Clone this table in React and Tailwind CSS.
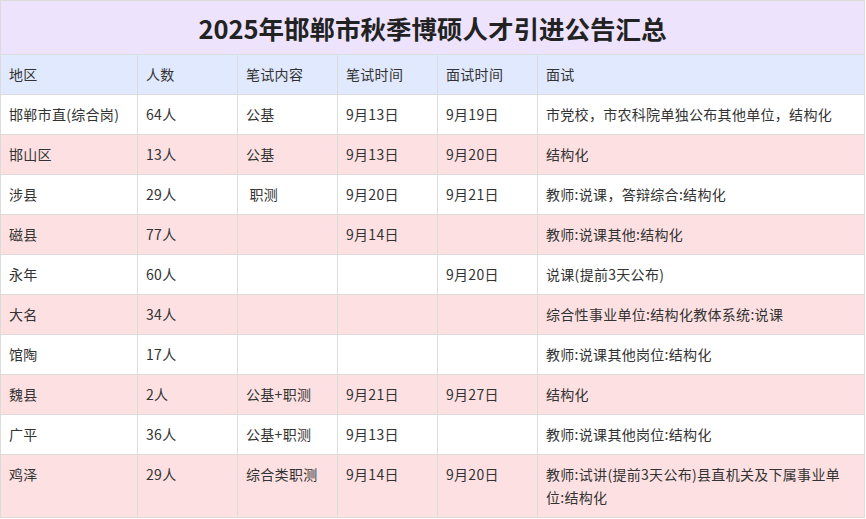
const rows = [
  ["邯郸市直(综合岗)", "64人", "公基", "9月13日", "9月19日", "市党校，市农科院单独公布其他单位，结构化"],
  ["邯山区", "13人", "公基", "9月13日", "9月20日", "结构化"],
  ["涉县", "29人", "\u00a0职测", "9月20日", "9月21日", "教师:说课，答辩综合:结构化"],
  ["磁县", "77人", "", "9月14日", "", "教师:说课其他:结构化"],
  ["永年", "60人", "", "", "9月20日", "说课(提前3天公布)"],
  ["大名", "34人", "", "", "", "综合性事业单位:结构化教体系统:说课"],
  ["馆陶", "17人", "", "", "", "教师:说课其他岗位:结构化"],
  ["魏县", "2人", "公基+职测", "9月21日", "9月27日", "结构化"],
  ["广平", "36人", "公基+职测", "9月13日", "", "教师:说课其他岗位:结构化"],
  ["鸡泽", "29人", "综合类职测", "9月14日", "9月20日", "教师:试讲(提前3天公布)县直机关及下属事业单位:结构化"],
];

const heads = ["地区", "人数", "笔试内容", "笔试时间", "面试时间", "面试"];

const App = () => {
  return (
    <div className="w-[866px] h-[519px] bg-white text-[#333] font-['Noto_Sans_CJK_SC','Noto_Sans',sans-serif]">
      <table className="w-[865px] table-fixed border-collapse text-[14px] tracking-[0.3px]">
        <colgroup>
          <col className="w-[137px]" />
          <col className="w-[100px]" />
          <col className="w-[100px]" />
          <col className="w-[100px]" />
          <col className="w-[100px]" />
          <col />
        </colgroup>
        <thead>
          <tr>
            <th
              colSpan={6}
              className="h-[54px] border border-[#dcdcdc] bg-[#ede3fd] text-center text-[25.5px] font-bold tracking-normal text-[#222] leading-[53px]"
            >
              2025年邯郸市秋季博硕人才引进公告汇总
            </th>
          </tr>
          <tr className="bg-[#e0e9fd]">
            {heads.map((h) => (
              <th
                key={h}
                className="border border-[#dcdcdc] px-2 py-2 text-left font-normal leading-[23px] align-top"
              >
                {h}
              </th>
            ))}
          </tr>
        </thead>
        <tbody>
          {rows.map((r, i) => (
            <tr key={i} className={i % 2 === 1 ? "bg-[#fde1e2]" : "bg-white"}>
              {r.map((c, j) => (
                <td
                  key={j}
                  className="border border-[#dcdcdc] px-2 py-2 leading-[23px] align-top"
                >
                  {c}
                </td>
              ))}
            </tr>
          ))}
        </tbody>
      </table>
    </div>
  );
};

export default App;
